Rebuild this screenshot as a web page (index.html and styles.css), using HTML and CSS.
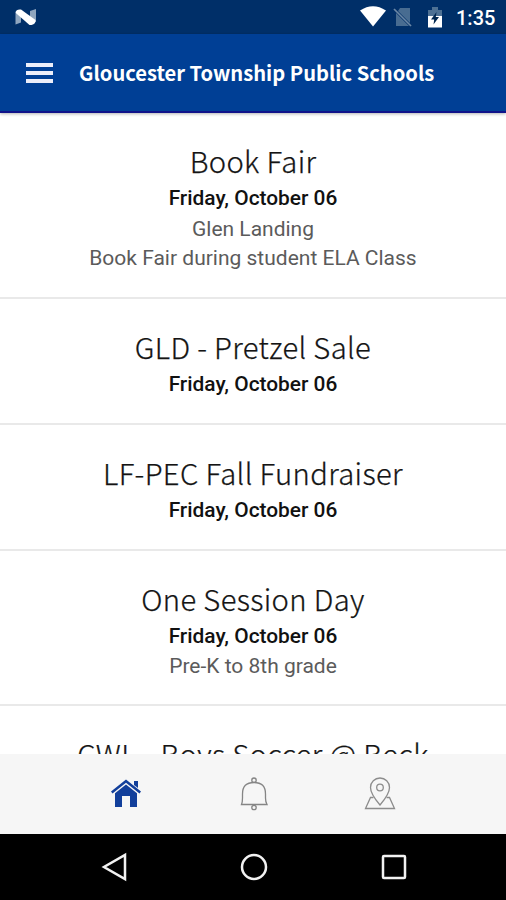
FILE: index.html
```html
<!DOCTYPE html>
<html lang="en">
<head>
<meta charset="utf-8">
<title>Gloucester Township Public Schools</title>
<link rel="stylesheet" href="styles.css">
</head>
<body>
<div class="status">
  <svg class="n-logo" width="22" height="18" viewBox="0 0 22 18"><path d="M.5 3.500L6 6V14.500L.5 16.500zM15 3L21 1V14L15 12z" fill="#8fa6bf"/><path d="M.8 4Q1 1 6 1.500L20.500 12Q21 16 16.500 17H14.500L.8 5z" fill="#fff"/></svg>
  <div class="status-right">
    <svg class="wifi" width="26" height="21" viewBox="0 0 26 21"><path d="M0 4.5Q13-4 26 4.5L13 20.5z" fill="#fff"/></svg>
    <svg class="sim" width="20" height="21" viewBox="0 0 20 21"><path d="M7 1H17V16L5 4zM3 6L16 19H3z" fill="#486c91"/><path d="M1 2L18 19" stroke="#6b88a6" stroke-width="1.7"/></svg>
    <svg class="battery" width="14" height="21" viewBox="0 0 14 21"><path d="M0 9V3H4V0H10V3H14V9z" fill="#4e7194"/><path d="M0 9H14V20.5H0z" fill="#fff"/><path d="M8.5 5L3 12.5H6.2L5.5 17.5L11 10H7.8z" fill="#00264f"/></svg>
    <span class="time">1:35</span>
  </div>
</div>
<header class="appbar">
  <div class="menu"><i></i><i></i><i></i></div>
  <h1>Gloucester Township Public Schools</h1>
</header>
<main class="events">
  <article class="event with-place">
    <h2>Book Fair</h2>
    <p class="date">Friday, October 06</p>
    <p class="place">Glen Landing</p>
    <p class="note">Book Fair during student ELA Class</p>
  </article>
  <article class="event">
    <h2>GLD - Pretzel Sale</h2>
    <p class="date">Friday, October 06</p>
  </article>
  <article class="event">
    <h2>LF-PEC Fall Fundraiser</h2>
    <p class="date">Friday, October 06</p>
  </article>
  <article class="event">
    <h2>One Session Day</h2>
    <p class="date">Friday, October 06</p>
    <p class="note">Pre-K to 8th grade</p>
  </article>
  <article class="event">
    <h2>CWL - Boys Soccer @ Beck</h2>
  </article>
</main>
<nav class="tabs">
  <svg width="32" height="30" viewBox="0 0 32 30" fill="#123f9b"><path d="M16 .5L31 12.5L29.5 14.5L16 3.7L2.5 14.5L1 12.5z"/><path d="M24 2H28V9L24 6z"/><path d="M16 5.5L27 14.2V28H20V17H12V28H5V14.2z"/></svg>
  <svg width="30" height="36" viewBox="0 0 30 36" fill="none" stroke="#858585" stroke-width="1.3"><circle cx="16" cy="4.200" r="2.200"/><path d="M3.500 28.500H29Q27.500 26 27.500 22V18Q27.500 6.500 16 6.500T4.500 18V22Q4.500 26 3.500 28.500z"/><circle cx="16" cy="31.500" r="2.200"/></svg>
  <svg width="32" height="34" viewBox="0 0 32 34" fill="none" stroke="#8c8c8c" stroke-width="1.3"><path d="M16 28Q6.500 17 6.500 10.500A9.500 9.500 0 0 1 25.500 10.500Q25.500 17 16 28z"/><circle cx="16" cy="10.500" r="3.300"/><path d="M9.500 20.500H6.500L1.500 31.500H30.500L25.500 20.500H22.500"/></svg>
</nav>
<footer class="softkeys">
  <svg width="28" height="30" viewBox="0 0 28 30"><path d="M25 3V27L4 15z"/></svg>
  <svg width="28" height="30" viewBox="0 0 28 30"><circle cx="14" cy="15" r="12"/></svg>
  <svg width="28" height="30" viewBox="0 0 28 30"><rect x="3" y="4" width="22" height="22" rx="1"/></svg>
</footer>
</body>
</html>
```
FILE: styles.css
```css
* { box-sizing: border-box; }
body {
  margin: 0;
  width: 506px;
  height: 900px;
  overflow: hidden;
  display: flex;
  flex-direction: column;
  background: #fff;
  font-family: Roboto, "Liberation Sans", sans-serif;
}
h1, h2, p { margin: 0; }
svg { display: block; }

.status {
  flex: none;
  height: 34px;
  display: flex;
  justify-content: space-between;
  padding: 0 11px 0 15px;
  background: #002f68;
}
.n-logo { margin-top: 8px; }
.status-right { display: flex; }
.wifi { margin-top: 6px; }
.sim { margin: 7px 0 0 7px; }
.battery { margin: 7px 0 0 15px; }
.time {
  margin-left: 14px;
  width: 39px;
  color: #fff;
  font-size: 20px;
  font-weight: 500;
  line-height: 37px;
  white-space: nowrap;
}

.appbar {
  flex: none;
  height: 79px;
  display: flex;
  align-items: center;
  padding: 1px 0 0 26px;
  background: #003f95;
  border-bottom: 2px solid #10138a;
  position: relative;
  box-shadow: 0 1px 3px rgba(0, 0, 0, .3);
}
.menu { width: 27px; display: grid; gap: 4px; }
.menu i { height: 4px; background: #eceefa; }
h1 {
  margin-left: 26px;
  color: #fff;
  font: 700 20.15px/40px "Noto Sans CJK JP", sans-serif;
  white-space: nowrap;
}

.events { flex: none; height: 641px; overflow: hidden; }
.event {
  padding: 29px 0 23px;
  border-bottom: 2px solid #e9e9e9;
  text-align: center;
}
.with-place { padding-bottom: 25px; }
h2 {
  color: #141414;
  font: 300 29.2px/36px "Noto Sans CJK JP", sans-serif;
  letter-spacing: .35px;
  -webkit-text-stroke: .25px #141414;
  white-space: nowrap;
}
.date {
  padding-top: 4px;
  color: #111;
  font-size: 20.9px;
  font-weight: 500;
  line-height: 32px;
}
.place, .note { color: #5b5b5b; font-size: 21px; line-height: 28.5px; }
.place { padding-top: 1px; }

.tabs {
  flex: none;
  height: 80px;
  display: flex;
  justify-content: center;
  align-items: center;
  gap: 96px;
  background: #f6f6f6;
}
.softkeys {
  flex: 1;
  display: flex;
  justify-content: center;
  align-items: center;
  gap: 112px;
  padding-left: 1px;
  background: #000;
}
.softkeys svg { fill: none; stroke: #f2f2f2; stroke-width: 2.5; }
```
